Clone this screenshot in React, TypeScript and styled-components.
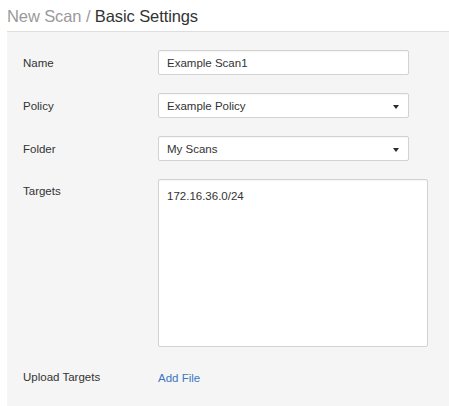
import React from "react";
import styled, { createGlobalStyle } from "styled-components";

const GlobalStyle = createGlobalStyle`
  html, body {
    margin: 0;
    padding: 0;
    background: #ffffff;
    font-family: "Liberation Sans", Arial, sans-serif;
  }
`;

const Page = styled.div`
  padding: 8px 0 0 7px;
  width: 442px;
`;

const Title = styled.h1`
  margin: 0 0 6px 0;
  font-size: 16.5px;
  font-weight: normal;
  line-height: 17px;
  color: #333;
  letter-spacing: -0.1px;
`;

const Crumb = styled.span`
  color: #9a9a9a;
`;

const Panel = styled.div`
  background: #f5f5f5;
  border-top: 1px solid #dedede;
  padding: 18px 0 0 16px;
  height: 375px;
  box-sizing: border-box;
`;

const Row = styled.div<{ $tall?: boolean; $gapTop?: number }>`
  display: grid;
  grid-template-columns: 135px 1fr;
  align-items: ${(p) => (p.$tall ? "start" : "center")};
  margin-top: ${(p) => p.$gapTop ?? 0}px;
  margin-bottom: 18px;
`;

const Label = styled.label<{ $top?: number }>`
  font-size: 11.5px;
  color: #333;
  padding-top: ${(p) => p.$top ?? 0}px;
`;

const Field = styled.div<{ $width: number; $height: number; $area?: boolean }>`
  position: relative;
  width: ${(p) => p.$width}px;
  height: ${(p) => p.$height}px;
  box-sizing: border-box;
  background: #fff;
  border: 1px solid #d2d2d2;
  border-radius: 2px;
  box-shadow: inset 0 1px 1px rgba(0, 0, 0, 0.04);
  padding: 0 8px;
  display: flex;
  align-items: ${(p) => (p.$area ? "flex-start" : "center")};
  font-size: 11.5px;
  color: #333;
`;

const AreaText = styled.div`
  padding-top: 10px;
`;

const Caret = styled.span`
  position: absolute;
  right: 9px;
  top: 50%;
  margin-top: -1px;
  width: 0;
  height: 0;
  border-left: 3.5px solid transparent;
  border-right: 3.5px solid transparent;
  border-top: 4px solid #2a2a2a;
`;

const Link = styled.a`
  font-size: 11.5px;
  color: #3b78c3;
  text-decoration: none;
`;

const App = () => (
  <>
    <GlobalStyle />
    <Page>
      <Title>
        <Crumb>New Scan / </Crumb>Basic Settings
      </Title>
      <Panel>
        <Row>
          <Label>Name</Label>
          <Field $width={251} $height={25}>Example Scan1</Field>
        </Row>
        <Row>
          <Label>Policy</Label>
          <Field $width={251} $height={25}>
            Example Policy
            <Caret />
          </Field>
        </Row>
        <Row>
          <Label>Folder</Label>
          <Field $width={251} $height={25}>
            My Scans
            <Caret />
          </Field>
        </Row>
        <Row $tall>
          <Label $top={6}>Targets</Label>
          <Field $width={270} $height={168} $area>
            <AreaText>172.16.36.0/24</AreaText>
          </Field>
        </Row>
        <Row $gapTop={21}>
          <Label>Upload Targets</Label>
          <div>
            <Link href="#">Add File</Link>
          </div>
        </Row>
      </Panel>
    </Page>
  </>
);

export default App;
